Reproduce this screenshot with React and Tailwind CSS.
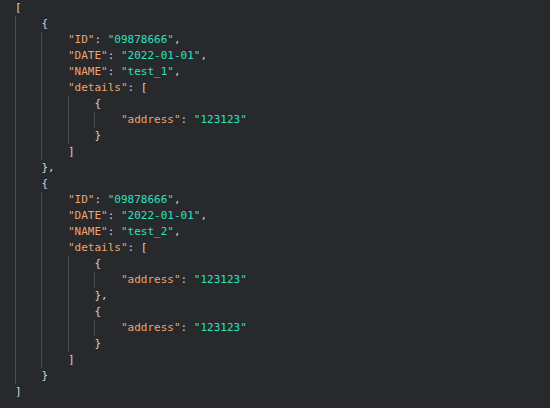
import React from 'react';

// token colours
const K = 'text-[#eaa66a]';
const S = 'text-[#2fe0bf]';
const P = 'text-[#d4d4d4]';

const kv = (key, val, comma) => [
  [`"${key}"`, K],
  [': ', P],
  [`"${val}"`, S],
  ...(comma ? [[',', P]] : []),
];

const objLines = (id, name, addrCount) => {
  const out = [
    { d: 1, t: [['{', P]] },
    { d: 2, t: kv('ID', id, true) },
    { d: 2, t: kv('DATE', '2022-01-01', true) },
    { d: 2, t: kv('NAME', name, true) },
    { d: 2, t: [['"details"', K], [': ', P], ['[', P]] },
  ];
  for (let i = 0; i < addrCount; i++) {
    out.push({ d: 3, t: [['{', P]] });
    out.push({ d: 4, t: kv('address', '123123', false) });
    out.push({ d: 3, t: [[i < addrCount - 1 ? '},' : '}', P]] });
  }
  out.push({ d: 2, t: [[']', P]] });
  return out;
};

const lines = [
  { d: 0, t: [['[', P]] },
  ...objLines('09878666', 'test_1', 1),
  { d: 1, t: [['},', P]] },
  ...objLines('09878666', 'test_2', 2),
  { d: 1, t: [['}', P]] },
  { d: 0, t: [[']', P]] },
];

const Line = ({ d, t }) => (
  <div className="flex h-4 items-center whitespace-pre">
    {Array.from({ length: d }).map((_, i) => (
      <span key={i} className="h-4 w-[4ch] shrink-0 border-l border-[#4a4d52]" />
    ))}
    {t.map(([txt, cls], i) => (
      <span key={i} className={cls}>{txt}</span>
    ))}
  </div>
);

export default function App() {
  return (
    <div
      className="h-[408px] w-[550px] overflow-hidden bg-[#27292d] pl-[15px] text-[11px] leading-4"
      style={{ fontFamily: '"DejaVu Sans Mono", monospace' }}
    >
      {lines.map((l, i) => (
        <Line key={i} {...l} />
      ))}
    </div>
  );
}
